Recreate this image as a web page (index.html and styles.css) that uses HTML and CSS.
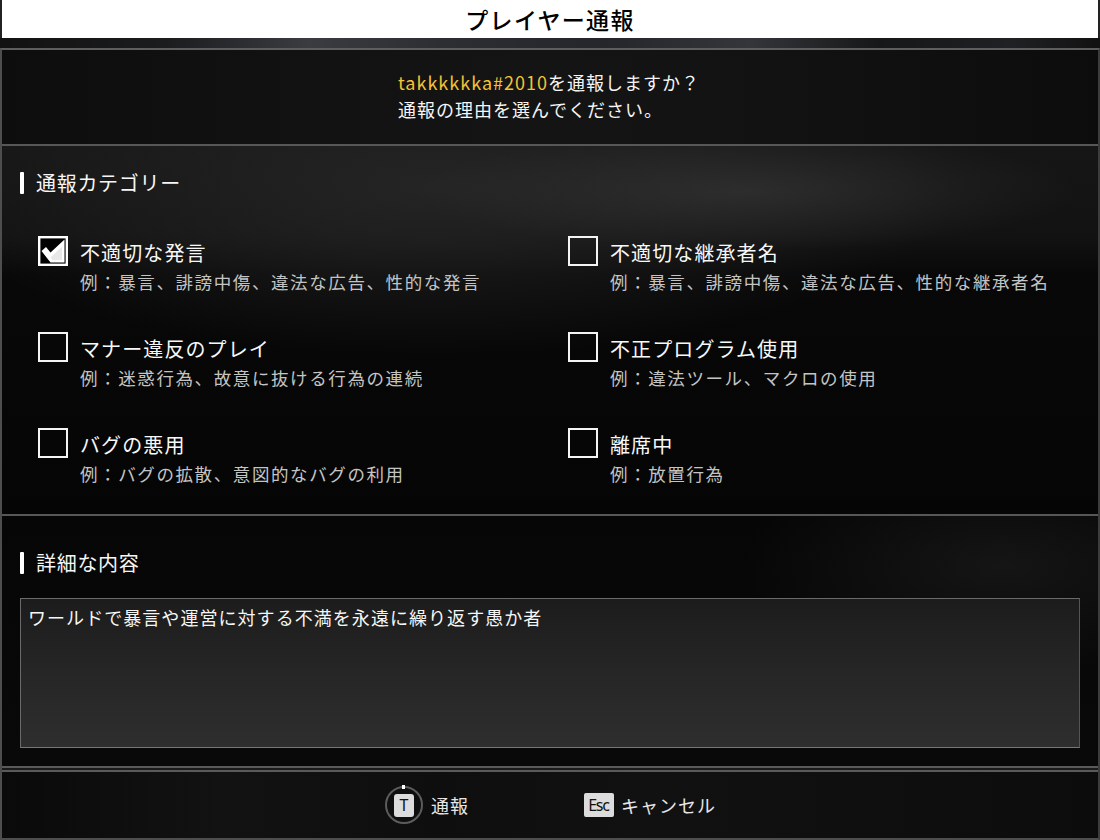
FILE: index.html
```html
<!DOCTYPE html>
<html lang="ja">
<head>
<meta charset="utf-8">
<title>プレイヤー通報</title>
<link rel="stylesheet" href="styles.css">
</head>
<body>
<div class="screen">
  <header class="title">プレイヤー通報</header>
  <div class="band"></div>
  <main class="panel">
    <section class="intro">
      <div class="intro-text">
        <div><span class="name">takkkkkka#2010</span>を通報しますか？</div>
        <div>通報の理由を選んでください。</div>
      </div>
    </section>
    <div class="divider"></div>
    <section class="cats">
      <h2 class="heading"><span class="bar"></span>通報カテゴリー</h2>
      <div class="grid">
        <div class="item">
          <span class="box checked">
            <svg width="30" height="30" viewBox="0 0 30 30"><rect x="1.2" y="1.2" width="27.6" height="27.6" fill="#000" stroke="#fff" stroke-width="2.4"/><polygon points="3.5,15 8,11 12.5,16.5 26.5,3.5 26.5,26.5 12.5,26.5" fill="#fff"/><polygon points="12.5,21.5 24,10.5 24,24 14.5,24" fill="#e8e8e8"/></svg>
          </span>
          <div class="txt"><div class="label">不適切な発言</div><div class="sub">例：暴言、誹謗中傷、違法な広告、性的な発言</div></div>
        </div>
        <div class="item">
          <span class="box"></span>
          <div class="txt"><div class="label">不適切な継承者名</div><div class="sub">例：暴言、誹謗中傷、違法な広告、性的な継承者名</div></div>
        </div>
        <div class="item">
          <span class="box"></span>
          <div class="txt"><div class="label">マナー違反のプレイ</div><div class="sub">例：迷惑行為、故意に抜ける行為の連続</div></div>
        </div>
        <div class="item">
          <span class="box"></span>
          <div class="txt"><div class="label">不正プログラム使用</div><div class="sub">例：違法ツール、マクロの使用</div></div>
        </div>
        <div class="item">
          <span class="box"></span>
          <div class="txt"><div class="label">バグの悪用</div><div class="sub">例：バグの拡散、意図的なバグの利用</div></div>
        </div>
        <div class="item">
          <span class="box"></span>
          <div class="txt"><div class="label">離席中</div><div class="sub">例：放置行為</div></div>
        </div>
      </div>
    </section>
    <div class="divider"></div>
    <section class="details">
      <h2 class="heading"><span class="bar"></span>詳細な内容</h2>
      <div class="textarea">ワールドで暴言や運営に対する不満を永遠に繰り返す愚か者</div>
    </section>
    <div class="double"></div>
    <footer class="footer">
      <div class="action">
        <span class="ring"><span class="notch"></span><span class="key">T</span></span>
        <span class="act-label">通報</span>
      </div>
      <div class="action">
        <span class="key esc">Esc</span>
        <span class="act-label">キャンセル</span>
      </div>
    </footer>
  </main>
</div>
</body>
</html>
```

FILE: styles.css
```css
* { box-sizing: border-box; margin: 0; padding: 0; }
html, body { width: 1100px; height: 840px; overflow: hidden; background: #000; }
body { font-family: "Noto Sans CJK JP", "Noto Sans", sans-serif; font-weight: 400; color: #f2f2f2; }

.screen { width: 1100px; height: 840px; display: flex; flex-direction: column; }

.title {
  height: 38px;
  background: #fff;
  color: #000;
  border-left: 2px solid #222;
  border-right: 2px solid #222;
  text-align: center;
  font-size: 23px;
  font-weight: 500;
  line-height: 38px;
  letter-spacing: 1.3px;
}

.band {
  height: 10px;
  background: linear-gradient(90deg, #121212 0%, #1b1c1e 15%, #3a3c40 28%, #2c2e31 40%, #24262a 55%, #34363a 68%, #161718 80%, #202124 92%, #111 100%);
}

.panel {
  flex: 1;
  display: flex;
  flex-direction: column;
  border-top: 2px solid #5e5e5e;
  border-left: 2px solid #4e4e4e;
  border-right: 2px solid #3c3c3c;
  border-bottom: 2px solid #4e4e4e;
  background: #0b0b0b;
}

.intro {
  height: 94px;
  display: flex;
  justify-content: center;
  padding-top: 19px;
  background: linear-gradient(90deg, #0d0d0d 0%, #121212 30%, #141414 50%, #121212 70%, #0c0c0c 100%);
}
.intro-text { font-size: 18px; line-height: 27px; letter-spacing: 1px; margin-left: -2px; color: #f6f6f6; }
.name { color: #f2c335; }

.divider { height: 2px; background: #575757; flex: none; }

.heading {
  display: flex;
  align-items: center;
  font-weight: 400;
  font-size: 20px;
  line-height: 24px;
  letter-spacing: 0.7px;
  color: #f6f6f6;
}
.bar { width: 4px; height: 22px; background: #fff; margin-right: 12px; border-radius: 1px; }

.cats {
  height: 368px;
  padding: 25px 0 0 18px;
  background:
    radial-gradient(ellipse 330px 60px at 745px 45px, rgba(60,60,60,0.55), rgba(40,40,40,0) 100%),
    radial-gradient(ellipse 520px 170px at 430px 40px, rgba(38,38,38,0.9), rgba(20,20,20,0) 100%),
    linear-gradient(180deg, #161616 0%, #121212 25%, #080808 35%, #050505 100%);
}

.grid {
  margin-top: 41px;
  display: grid;
  grid-template-columns: 530px 1fr;
  row-gap: 34px;
  padding-left: 18px;
}
.item { display: flex; align-items: flex-start; gap: 12px; height: 62px; }
.box {
  flex: none;
  width: 30px; height: 30px;
  border: 2px solid #f4f4f4;
  display: block;
}
.box.checked { border: none; }
.box svg { display: block; }
.txt { padding-top: 3px; }
.label { font-size: 20px; line-height: 28px; letter-spacing: 1.1px; color: #f8f8f8; }
.sub { font-size: 17.5px; line-height: 30px; letter-spacing: 1.6px; color: #c4c4c4; }

.details {
  height: 250px;
  padding: 35px 18px 0 18px;
  background:
    radial-gradient(ellipse 260px 110px at 1000px 50px, rgba(35,35,35,0.5), rgba(0,0,0,0) 100%),
    linear-gradient(180deg, #060606 0%, #090909 100%);
}
.textarea {
  margin-top: 23px;
  height: 150px;
  width: 1060px;
  border: 1px solid #6a6a6a;
  border-right-color: #555;
  border-bottom-color: #777;
  background: linear-gradient(180deg, #1c1c1c 0%, #262626 50%, #2e2e2e 100%);
  padding: 6px 7px;
  font-size: 18px;
  line-height: 24px;
  letter-spacing: 1.05px;
  color: #f6f6f6;
}

.double {
  height: 6px;
  flex: none;
  border-top: 2px solid #5a5a5a;
  border-bottom: 2px solid #5a5a5a;
  background: #1a1a1a;
}

.footer {
  flex: 1;
  display: flex;
  justify-content: center;
  align-items: center;
  gap: 115px;
  padding-left: 1px;
  background: linear-gradient(90deg, #0a0a0a 0%, #121212 20%, #0e0e0e 40%, #111 60%, #0c0c0c 100%);
}
.action { display: flex; align-items: center; gap: 8px; }
.act-label { font-size: 18px; letter-spacing: 1px; color: #e6e6e6; line-height: 24px; }
.ring {
  position: relative;
  width: 38px; height: 38px;
  border: 2px solid #5c5c5c;
  border-radius: 50%;
  display: flex; align-items: center; justify-content: center;
}
.notch { position: absolute; top: -3px; left: 15px; width: 3px; height: 4px; background: #fff; }
.key {
  width: 20px; height: 23px;
  background: #dcdcdc;
  color: #111;
  border-radius: 3px;
  font-family: "Noto Sans", sans-serif;
  font-size: 16px;
  line-height: 23px;
  text-align: center;
}
.key.esc {
  width: 30px; height: 24px;
  border-radius: 2px;
  font-size: 16px;
  letter-spacing: -1.2px;
  line-height: 24px;
  margin-right: -1px;
  padding-right: 1px;
}
```
